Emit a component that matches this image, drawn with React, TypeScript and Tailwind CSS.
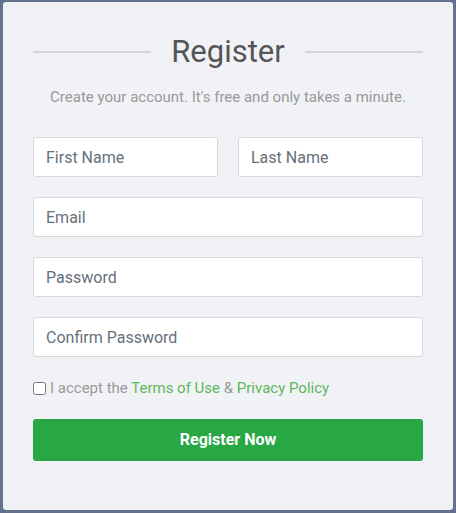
import React from "react";

const Field: React.FC<{ placeholder: string; type?: string }> = ({ placeholder, type = "text" }) => (
  <input
    type={type}
    placeholder={placeholder}
    className="w-full h-10 rounded-[3px] border border-[#d5d8dc] bg-white px-3 text-[16px] text-[#555] placeholder:text-[#66707b] outline-none"
  />
);

export default function App() {
  return (
    <div
      className="min-h-[513px] w-[456px] bg-[#64718a] px-[3px] pt-[2px]"
      style={{ fontFamily: "Roboto, 'Liberation Sans', sans-serif" }}
    >
      <div className="h-[508px] w-[450px] rounded-[3px] bg-[#f1f2f6] px-[30px] pt-[29px]">
        <div className="flex items-center gap-5">
          <div className="h-[2px] flex-1 bg-[#d3d5d9]" />
          <h2 className="text-[31px] leading-[42px] text-[#555]">Register</h2>
          <div className="h-[2px] flex-1 bg-[#d3d5d9]" />
        </div>
        <p className="mt-[14px] text-center text-[15px] leading-5 text-[#999]">
          Create your account. It's free and only takes a minute.
        </p>
        <div className="mt-[30px] flex flex-col gap-5">
          <div className="flex gap-5">
            <Field placeholder="First Name" />
            <Field placeholder="Last Name" />
          </div>
          <Field placeholder="Email" type="email" />
          <Field placeholder="Password" type="password" />
          <Field placeholder="Confirm Password" type="password" />
        </div>
        <label className="mt-[21px] flex items-center gap-[4px] text-[15px] leading-5 text-[#999]">
          <input type="checkbox" className="m-0 h-[13px] w-[13px]" />
          <span>
            I accept the <a className="text-[#5cb85c]">Terms of Use</a> &amp;{" "}
            <a className="text-[#5cb85c]">Privacy Policy</a>
          </span>
        </label>
        <button className="mt-[21px] h-[42px] w-full rounded-[3px] bg-[#28a745] text-[16px] font-bold text-white">
          Register Now
        </button>
      </div>
    </div>
  );
}
